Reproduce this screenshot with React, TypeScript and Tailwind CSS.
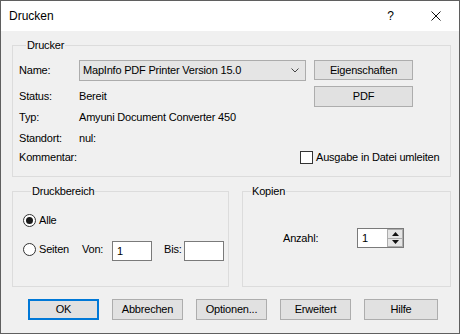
import React from "react";

function Button({ label, className = "", primary = false }: { label: string; className?: string; primary?: boolean }) {
  return (
    <div
      className={`flex items-center justify-center bg-[#e1e1e1] ${
        primary ? "border-2 border-[#0078d7]" : "border border-[#adadad]"
      } ${className}`}
    >
      {label}
    </div>
  );
}

function Radio({ checked = false }: { checked?: boolean }) {
  return (
    <div className="w-[13px] h-[13px] rounded-full border border-[#333] bg-white flex items-center justify-center">
      {checked && <div className="w-[7px] h-[7px] rounded-full bg-[#1a1a1a]" />}
    </div>
  );
}

export default function App() {
  return (
    <div className="w-[460px] h-[334px] border border-[#5f5f5f] bg-[#f0f0f0] flex flex-col text-[11px] tracking-[-0.2px] text-black font-['Liberation_Sans',Arial,sans-serif]">
      {/* title bar */}
      <div className="h-[30px] bg-white flex items-center pl-[8px] pr-[18px] text-[12px] tracking-normal shrink-0">
        <span>Drucken</span>
        <span className="ml-auto">?</span>
        <svg width="10" height="10" viewBox="0 0 10 10" className="ml-[37px]">
          <path d="M0.5 0.5L9.5 9.5M9.5 0.5L0.5 9.5" stroke="#111" strokeWidth="1" />
        </svg>
      </div>

      <div className="flex-1 pl-[11px] pr-[8px]">
        {/* Drucker */}
        <fieldset className="mt-[7px] border border-[#dcdcdc] pl-[6px] pb-[10px]">
          <legend className="ml-[7px] px-[1px] leading-[14px]">Drucker</legend>
          <div className="flex items-start mt-[8px] h-[21px]">
            <div className="w-[60px] h-[21px] flex items-center">Name:</div>
            <div className="w-[227px] h-[21px] border border-[#acacac] bg-[#e5e5e5] flex items-center justify-between pl-[3px] pr-[6px]">
              <span>MapInfo PDF Printer Version 15.0</span>
              <svg width="8" height="5" viewBox="0 0 8 5">
                <polyline points="0.5,0.5 4,4 7.5,0.5" fill="none" stroke="#444" strokeWidth="1" />
              </svg>
            </div>
            <Button label="Eigenschaften" className="ml-[8px] w-[99px] h-[20px]" />
          </div>
          <div className="flex items-center mt-[5px] h-[21px]">
            <div className="w-[60px]">Status:</div>
            <div className="w-[235px]">Bereit</div>
            <Button label="PDF" className="w-[99px] h-[21px]" />
          </div>
          <div className="flex items-center h-[20px]">
            <div className="w-[60px]">Typ:</div>
            <div>Amyuni Document Converter 450</div>
          </div>
          <div className="flex items-center mt-[1px] h-[20px]">
            <div className="w-[60px]">Standort:</div>
            <div>nul:</div>
          </div>
          <div className="flex items-center h-[18px]">
            <div className="w-[281px]">Kommentar:</div>
            <div className="w-[13px] h-[13px] border border-[#333] bg-white" />
            <span className="ml-[3px]">Ausgabe in Datei umleiten</span>
          </div>
        </fieldset>

        {/* lower groups */}
        <div className="flex mt-[7px]">
          <fieldset className="w-[217px] h-[103px] border border-[#dcdcdc] pl-[10px]">
            <legend className="ml-[8px] px-[1px] leading-[14px]">Druckbereich</legend>
            <div className="flex items-center mt-[12px] h-[20px] gap-[3px]">
              <Radio checked />
              <span>Alle</span>
            </div>
            <div className="flex items-center mt-[11px] h-[20px]">
              <div className="w-[59px] flex items-center gap-[3px] pb-[4px]">
                <Radio />
                <span>Seiten</span>
              </div>
              <div className="w-[30px] pb-[4px]">Von:</div>
              <div className="w-[40px] h-[20px] border border-[#7a7a7a] bg-white flex items-center pl-[4px]">1</div>
              <div className="ml-[12px] w-[20px] pb-[4px]">Bis:</div>
              <div className="w-[40px] h-[20px] border border-[#7a7a7a] bg-white" />
            </div>
          </fieldset>

          <fieldset className="ml-[13px] w-[209px] h-[103px] border border-[#dcdcdc] pl-[40px]">
            <legend className="ml-[-32px] px-[1px] leading-[14px]">Kopien</legend>
            <div className="flex items-center mt-[30px] h-[20px]">
              <div className="w-[74px]">Anzahl:</div>
              <div className="flex w-[47px] h-[20px] border border-[#7a7a7a] bg-white">
                <div className="flex-1 flex items-center pl-[4px]">1</div>
                <div className="w-[16px] flex flex-col bg-[#e5e5e5] border border-[#adadad]">
                  <div className="flex-1 flex items-center justify-center border-b border-[#adadad]">
                    <svg width="7" height="4" viewBox="0 0 7 4">
                      <polygon points="0,4 3.5,0 7,4" fill="#111" />
                    </svg>
                  </div>
                  <div className="flex-1 flex items-center justify-center">
                    <svg width="7" height="4" viewBox="0 0 7 4">
                      <polygon points="0,0 3.5,4 7,0" fill="#111" />
                    </svg>
                  </div>
                </div>
              </div>
            </div>
          </fieldset>
        </div>

        {/* buttons */}
        <div className="flex mt-[12px] pl-[16px] gap-[13px]">
          <Button label="OK" primary className="w-[71px] h-[21px]" />
          <Button label="Abbrechen" className="w-[71px] h-[21px]" />
          <Button label="Optionen..." className="w-[71px] h-[21px]" />
          <Button label="Erweitert" className="w-[71px] h-[21px]" />
          <Button label="Hilfe" className="w-[74px] h-[21px]" />
        </div>
      </div>
    </div>
  );
}
